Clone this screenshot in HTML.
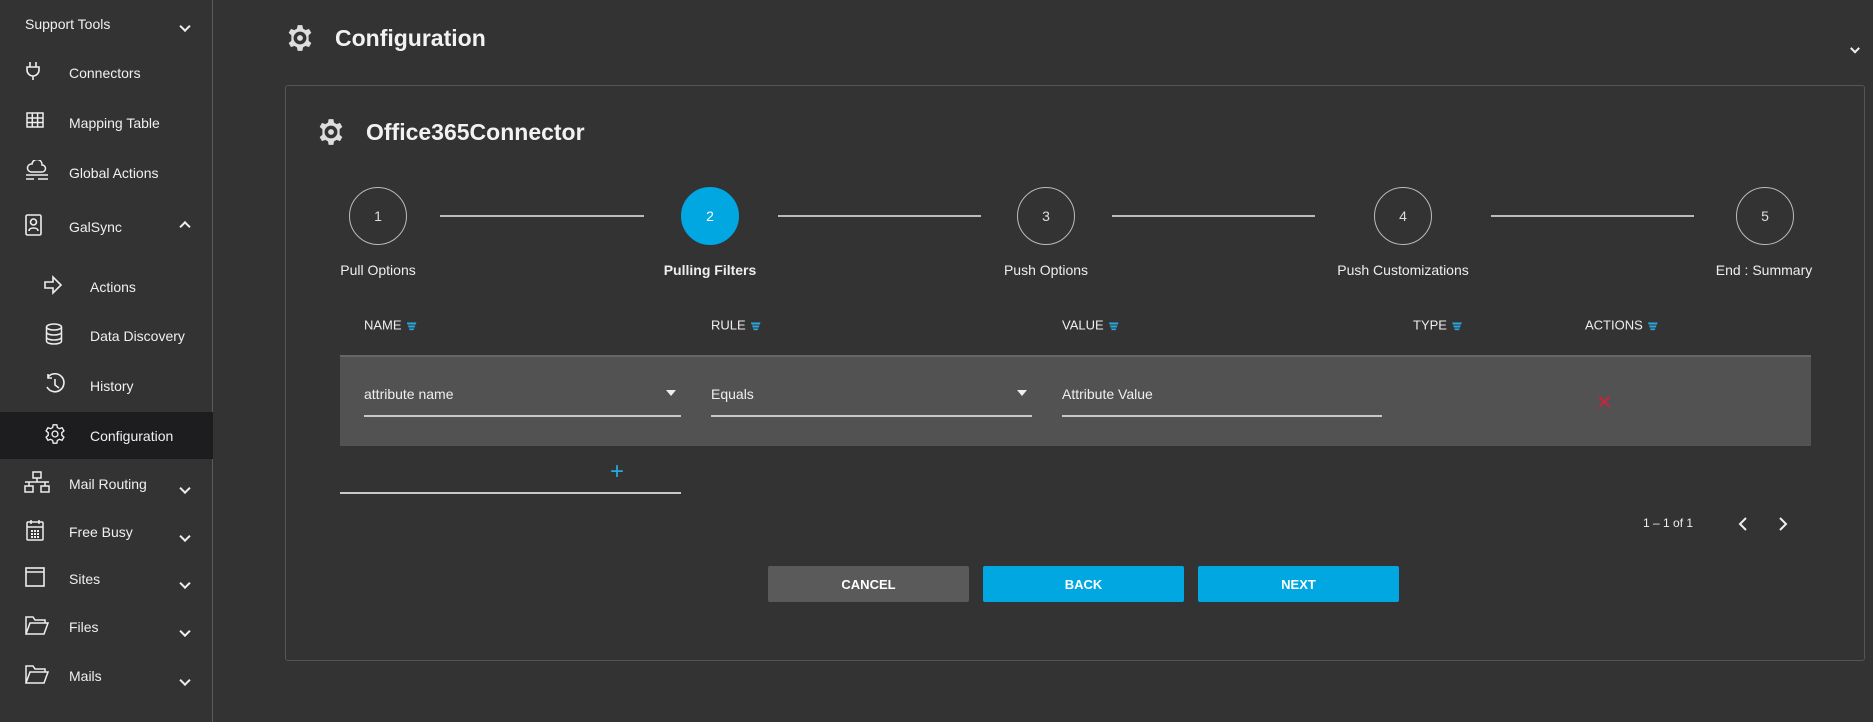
<!DOCTYPE html>
<html><head><meta charset="utf-8"><style>
*{margin:0;padding:0;box-sizing:border-box}
body{width:1873px;height:722px;background:#333;font-family:"Liberation Sans",sans-serif;color:#eee;position:relative;overflow:hidden}
.a{position:absolute;white-space:nowrap}
.sb{position:absolute;left:0;top:0;width:213px;height:722px;border-right:1px solid #5a5a5a;background:#333}
.it{font-size:14px;color:#f0f0f0;transform:translateY(-50%)}
.ic{position:absolute;transform:translate(-50%,-50%)}
.chev{position:absolute;width:8px;height:8px;border-right:2px solid #eee;border-bottom:2px solid #eee;transform:translate(-50%,-70%) rotate(45deg)}
.chevu{position:absolute;width:8px;height:8px;border-left:2px solid #eee;border-top:2px solid #eee;transform:translate(-50%,-30%) rotate(45deg)}
.circ{position:absolute;width:58px;height:58px;border:1.5px solid #bbb;border-radius:50%;transform:translate(-50%,-50%);display:flex;align-items:center;justify-content:center;font-size:14px;color:#ddd}
.ln{position:absolute;height:2px;background:#bbb;top:215px}
.lbl{position:absolute;top:270px;font-size:14px;color:#eee;transform:translate(-50%,-50%)}
.th{position:absolute;top:325px;font-size:13px;color:#eee;transform:translateY(-50%)}
.th i{display:inline-block;width:10px;height:8px;margin-left:5px;vertical-align:middle;background:linear-gradient(#29a8e0 0 2px,transparent 2px 3px,#29a8e0 3px 5px,transparent 5px 6px,#29a8e0 6px 8px);clip-path:polygon(0 0,100% 0,70% 100%,30% 100%)}
.ul{position:absolute;height:2px;background:#c8c8c8}
.btn{position:absolute;top:566px;height:36px;width:201px;display:flex;align-items:center;justify-content:center;font-size:13px;font-weight:bold;color:#fff;border-radius:2px}
</style></head><body>
<div class="sb">
<div class="a it" style="left:25px;top:24px">Support Tools</div><div class="chev" style="left:185px;top:28px"></div>
<svg class="ic" style="left:33px;top:71px" width="16" height="20" viewBox="0 0 16 20" fill="none" stroke="#eee" stroke-width="1.6"><path d="M5 1v5M11 1v5M2 6h12v3a6 6 0 0 1-12 0zM8 15v4"/></svg>
<div class="a it" style="left:69px;top:73px">Connectors</div>
<svg class="ic" style="left:35px;top:120px" width="18" height="16" viewBox="0 0 18 16" fill="none" stroke="#eee" stroke-width="1.5"><rect x="1" y="1" width="16" height="14"/><path d="M1 6h16M1 10.5h16M6.3 1v14M11.6 1v14"/></svg>
<div class="a it" style="left:69px;top:123px">Mapping Table</div>
<svg class="ic" style="left:37px;top:171px" width="24" height="22" viewBox="0 0 24 22" fill="none" stroke="#eee" stroke-width="1.5"><path d="M6 12a4 4 0 0 1 1-8 5 5 0 0 1 10 1 3.5 3.5 0 0 1 0 7zM1 15h22M1 19h8M13 19h10"/></svg>
<div class="a it" style="left:69px;top:173px">Global Actions</div>
<svg class="ic" style="left:34px;top:225px" width="18" height="22" viewBox="0 0 18 22" fill="none" stroke="#eee" stroke-width="1.6"><rect x="1" y="1" width="15" height="20" rx="1.5"/><circle cx="8.5" cy="8" r="3"/><path d="M4 17c0-4 9-4 9 0"/></svg>
<div class="a it" style="left:69px;top:227px">GalSync</div><div class="chevu" style="left:185px;top:225px"></div>
<svg class="ic" style="left:53px;top:285px" width="20" height="20" viewBox="0 0 20 20" fill="none" stroke="#eee" stroke-width="1.6"><path d="M2 7h8V2l8 8-8 8v-5H2z"/></svg>
<div class="a it" style="left:90px;top:287px">Actions</div>
<svg class="ic" style="left:54px;top:334px" width="18" height="22" viewBox="0 0 18 22" fill="none" stroke="#eee" stroke-width="1.5"><ellipse cx="9" cy="4" rx="7.5" ry="3"/><path d="M1.5 4v14c0 4 15 4 15 0V4M1.5 9c0 4 15 4 15 0M1.5 14c0 4 15 4 15 0"/></svg>
<div class="a it" style="left:90px;top:336px">Data Discovery</div>
<svg class="ic" style="left:55px;top:384px" width="22" height="22" viewBox="0 0 22 22" fill="none" stroke="#eee" stroke-width="1.6"><path d="M4 4a9 9 0 1 1-1 10M4 1v4h4M11 6v6l4 3"/></svg>
<div class="a it" style="left:90px;top:386px">History</div>
<div class="a" style="left:0;top:412px;width:213px;height:47px;background:#1d1d20"></div>
<svg class="ic" style="left:55px;top:434px" width="22" height="22" viewBox="0 0 24 24" fill="none" stroke="#eee" stroke-width="1.5"><circle cx="12" cy="12" r="3.2"/><path d="M10 2h4l.6 3 2.2 1.2 2.9-1 2 3.4-2.3 2v2.8l2.3 2-2 3.4-2.9-1-2.2 1.2-.6 3h-4l-.6-3-2.2-1.2-2.9 1-2-3.4 2.3-2v-2.8l-2.3-2 2-3.4 2.9 1L9.4 5z"/></svg>
<div class="a it" style="left:90px;top:436px">Configuration</div>
<svg class="ic" style="left:37px;top:482px" width="26" height="22" viewBox="0 0 26 22" fill="none" stroke="#eee" stroke-width="1.5"><rect x="9" y="1" width="8" height="6"/><rect x="1" y="15" width="8" height="6"/><rect x="17" y="15" width="8" height="6"/><path d="M13 7v4M5 15v-4h16v4M1 11h24"/></svg>
<div class="a it" style="left:69px;top:484px">Mail Routing</div><div class="chev" style="left:185px;top:490px"></div>
<svg class="ic" style="left:35px;top:530px" width="18" height="22" viewBox="0 0 18 22" fill="none" stroke="#eee" stroke-width="1.5"><rect x="1" y="3" width="16" height="18" rx="1"/><path d="M1 8h16M5 1v4M13 1v4"/><path d="M5 12h8M5 15h8M5 18h8" stroke-width="2" stroke-dasharray="2 1"/></svg>
<div class="a it" style="left:69px;top:532px">Free Busy</div><div class="chev" style="left:185px;top:538px"></div>
<svg class="ic" style="left:35px;top:577px" width="20" height="20" viewBox="0 0 20 20" fill="none" stroke="#eee" stroke-width="1.6"><rect x="1" y="1" width="18" height="18"/><path d="M1 5h18"/></svg>
<div class="a it" style="left:69px;top:579px">Sites</div><div class="chev" style="left:185px;top:585px"></div>
<svg class="ic" style="left:37px;top:625px" width="24" height="20" viewBox="0 0 24 20" fill="none" stroke="#eee" stroke-width="1.5"><path d="M1 19V2h7l2 3h10v3M1 19l4-11h18l-4 11z"/></svg>
<div class="a it" style="left:69px;top:627px">Files</div><div class="chev" style="left:185px;top:633px"></div>
<svg class="ic" style="left:37px;top:674px" width="24" height="20" viewBox="0 0 24 20" fill="none" stroke="#eee" stroke-width="1.5"><path d="M1 19V2h7l2 3h10v3M1 19l4-11h18l-4 11z"/></svg>
<div class="a it" style="left:69px;top:676px">Mails</div><div class="chev" style="left:185px;top:682px"></div>
</div>

<svg class="ic" style="left:300px;top:38px" width="28" height="28" viewBox="0 0 24 24" fill="#ddd"><path fill-rule="evenodd" d="M10 1h4l.6 3 2.2 1.2 2.9-1 2 3.4-2.3 2v4.8l2.3 2-2 3.4-2.9-1-2.2 1.2-.6 3h-4l-.6-3-2.2-1.2-2.9 1-2-3.4 2.3-2V9.6l-2.3-2 2-3.4 2.9 1L9.4 4zM12 6.5a5.5 5.5 0 1 0 0 11 5.5 5.5 0 0 0 0-11zM12 9.5a2.5 2.5 0 1 1 0 5 2.5 2.5 0 0 1 0-5z"/></svg>
<div class="a" style="left:335px;top:25px;font-size:23px;font-weight:bold;color:#f2f2f2">Configuration</div>
<div class="chev" style="left:1855px;top:50px;width:7px;height:7px"></div>

<div class="a" style="left:285px;top:85px;width:1580px;height:576px;border:1px solid #555;border-radius:3px"></div>
<svg class="ic" style="left:331px;top:132px" width="28" height="28" viewBox="0 0 24 24" fill="#ddd"><path fill-rule="evenodd" d="M10 1h4l.6 3 2.2 1.2 2.9-1 2 3.4-2.3 2v4.8l2.3 2-2 3.4-2.9-1-2.2 1.2-.6 3h-4l-.6-3-2.2-1.2-2.9 1-2-3.4 2.3-2V9.6l-2.3-2 2-3.4 2.9 1L9.4 4zM12 6.5a5.5 5.5 0 1 0 0 11 5.5 5.5 0 0 0 0-11zM12 9.5a2.5 2.5 0 1 1 0 5 2.5 2.5 0 0 1 0-5z"/></svg>
<div class="a" style="left:366px;top:119px;font-size:23px;font-weight:bold;color:#f2f2f2">Office365Connector</div>

<div class="circ" style="left:378px;top:216px">1</div>
<div class="circ" style="left:710px;top:216px;background:#00a7e1;border-color:#00a7e1;color:#fff">2</div>
<div class="circ" style="left:1046px;top:216px">3</div>
<div class="circ" style="left:1403px;top:216px">4</div>
<div class="circ" style="left:1765px;top:216px">5</div>
<div class="ln" style="left:440px;width:204px"></div>
<div class="ln" style="left:778px;width:203px"></div>
<div class="ln" style="left:1112px;width:203px"></div>
<div class="ln" style="left:1491px;width:203px"></div>
<div class="lbl" style="left:378px">Pull Options</div>
<div class="lbl" style="left:710px;font-weight:bold">Pulling Filters</div>
<div class="lbl" style="left:1046px">Push Options</div>
<div class="lbl" style="left:1403px">Push Customizations</div>
<div class="lbl" style="left:1764px">End : Summary</div>

<div class="th" style="left:364px">NAME<i></i></div>
<div class="th" style="left:711px">RULE<i></i></div>
<div class="th" style="left:1062px">VALUE<i></i></div>
<div class="th" style="left:1413px">TYPE<i></i></div>
<div class="th" style="left:1585px">ACTIONS<i></i></div>

<div class="a" style="left:340px;top:355px;width:1471px;height:91px;background:#525252;border-top:2px solid #666"></div>
<div class="a" style="left:364px;top:386px;font-size:14px;color:#eee">attribute name</div>
<div class="a" style="left:711px;top:386px;font-size:14px;color:#eee">Equals</div>
<div class="a" style="left:1062px;top:386px;font-size:14px;color:#eee">Attribute Value</div>
<div class="a" style="left:666px;top:390px;width:0;height:0;border:5px solid transparent;border-top:6px solid #eee"></div>
<div class="a" style="left:1017px;top:390px;width:0;height:0;border:5px solid transparent;border-top:6px solid #eee"></div>
<div class="ul" style="left:364px;top:415px;width:317px"></div>
<div class="ul" style="left:711px;top:415px;width:321px"></div>
<div class="ul" style="left:1062px;top:415px;width:320px"></div>
<div class="a" style="left:1596px;top:390px;font-size:20px;color:#d0203a">✕</div>

<div class="a" style="left:610px;top:458px;font-size:24px;color:#29a8e0">+</div>
<div class="ul" style="left:340px;top:492px;width:341px"></div>

<div class="a" style="left:1643px;top:516px;font-size:12px;color:#eee">1 – 1 of 1</div>
<svg class="a" style="left:1737px;top:516px" width="12" height="16" viewBox="0 0 12 16" fill="none" stroke="#eee" stroke-width="2"><path d="M9 2L3 8l6 6"/></svg>
<svg class="a" style="left:1777px;top:516px" width="12" height="16" viewBox="0 0 12 16" fill="none" stroke="#eee" stroke-width="2"><path d="M3 2l6 6-6 6"/></svg>

<div class="btn" style="left:768px;background:#5a5a5a">CANCEL</div>
<div class="btn" style="left:983px;background:#00a7e1">BACK</div>
<div class="btn" style="left:1198px;background:#00a7e1">NEXT</div>
</body></html>
